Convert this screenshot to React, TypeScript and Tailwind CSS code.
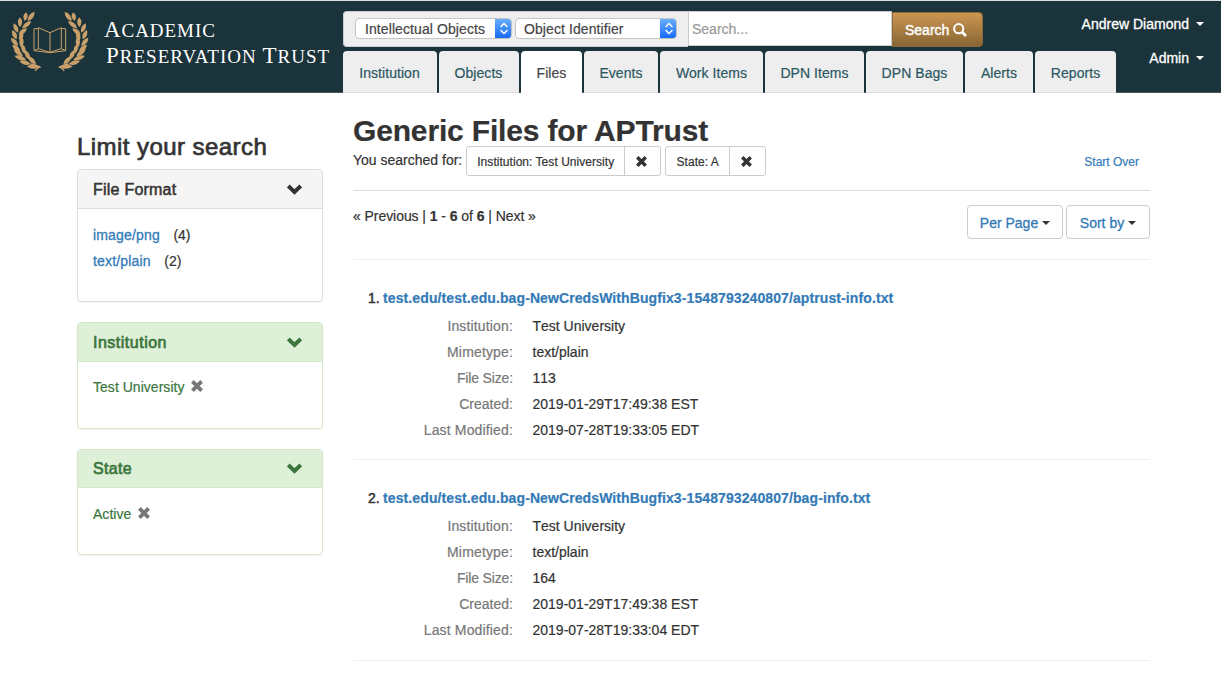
import React from 'react';

const LEAVES: number[][] = [
  [83, 63, 104, 35], [74, 63, 79, 37], [60, 81, 60, 52], [66, 85, 94, 63], [54, 98, 41, 70],
  [56, 104, 81, 85], [50, 118, 37, 90], [59, 121, 68, 95], [54, 138, 33, 113], [64, 143, 65, 108],
  [61, 155, 37, 134], [74, 161, 67, 133], [69, 169, 41, 148], [78, 179, 43, 167], [89, 179, 75, 150],
  [92, 193, 58, 183], [108, 193, 83, 169], [120, 201, 80, 199],
];

function leafPath([x1, y1, x2, y2]: number[]) {
  const mx = (x1 + x2) / 2;
  const my = (y1 + y2) / 2;
  const len = Math.hypot(x2 - x1, y2 - y1);
  const nx = (-(y2 - y1) / len) * 13;
  const ny = ((x2 - x1) / len) * 13;
  return `M${x1} ${y1}Q${mx + nx} ${my + ny} ${x2} ${y2}Q${mx - nx} ${my - ny} ${x1} ${y1}Z`;
}

function Branch() {
  return (
    <g fill="#c9a06a">
      {LEAVES.map((l, i) => <path key={i} d={leafPath(l)} />)}
      <path d="M92 192Q112 196 122 203M120 199L105 212" fill="none" stroke="#c9a06a" strokeWidth="4" />
    </g>
  );
}

function Emblem() {
  return (
    <svg className="h-20 w-[100px] shrink-0" viewBox="0 0 300 240">
      <Branch />
      <g transform="translate(298 0) scale(-1 1)"><Branch /></g>
      <g fill="none" stroke="#c9a06a" strokeWidth="3">
        <path d="M115 83L150 98L184 83V146L150 157L115 146Z" />
        <path d="M150 98V157" />
        <path d="M115 86H102V152L150 158L197 152V86H184M102 152L115 146M197 152L184 146" />
      </g>
    </svg>
  );
}

function Chevron() {
  return (
    <svg className="-mt-px h-[11px] w-[15px]" viewBox="0 0 14 10" fill="none" stroke="currentColor" strokeWidth="3.7">
      <path d="M1.2 1.7L7 7.3L12.8 1.7" />
    </svg>
  );
}

function Cross({ className }: { className: string }) {
  return (
    <svg className={className} viewBox="0 0 12 12" fill="none" stroke="currentColor" strokeWidth="3.8">
      <path d="M1.4 1.4L10.6 10.6M10.6 1.4L1.4 10.6" />
    </svg>
  );
}

function Caret() {
  return <span className="inline-block border-x-4 border-t-4 border-x-transparent border-t-current" />;
}

function NativeSelect({ label, className }: { label: string; className: string }) {
  return (
    <div className={`flex h-[21px] overflow-hidden rounded-[4px] border border-[#c4c4c4] bg-white text-[14px] leading-[20px] tracking-[0.09px] text-[#444] ${className}`}>
      <span className="flex-1 whitespace-nowrap">{label}</span>
      <span className="-my-px -mr-px flex w-[17px] items-center justify-center bg-linear-to-b from-[#6cb0fb] to-[#0a66f8]">
        <svg className="h-[13px] w-2" viewBox="0 0 8 13" fill="none" stroke="#fff" strokeWidth="1.5" strokeLinecap="round" strokeLinejoin="round">
          <path d="M1 4.5L4 1.5L7 4.5M1 8.5L4 11.5L7 8.5" />
        </svg>
      </span>
    </div>
  );
}

const TABS = [
  { label: 'Institution', w: 'w-[94px] pr-px' },
  { label: 'Objects', w: 'w-[80px] pr-px' },
  { label: 'Files', w: 'w-[61px]' },
  { label: 'Events', w: 'w-[74px]' },
  { label: 'Work Items', w: 'w-[103px]' },
  { label: 'DPN Items', w: 'w-[99px]' },
  { label: 'DPN Bags', w: 'w-[97px]' },
  { label: 'Alerts', w: 'w-[68px]' },
  { label: 'Reports', w: 'w-[81px]' },
];

function Header() {
  return (
    <header className="flex h-[93px] border-t border-b border-t-[#dcdfdf] border-b-[#47565b] bg-[#1b333a]">
      <div className="flex w-[343px] shrink-0">
        <div className="-mt-px"><Emblem /></div>
        <div className="ml-1 pt-4 font-['Liberation_Serif',serif] text-[19px] leading-[25px] whitespace-nowrap text-white [-webkit-text-stroke:0]">
          <div className="tracking-[0.95px]"><span className="text-[23px]">A</span>CADEMIC</div>
          <div className="ml-0.5 tracking-[1px]">
            <span className="text-[23px]">P</span>RESERVATION <span className="text-[23px]">T</span>RUST
          </div>
        </div>
      </div>
      <div className="-mb-px flex w-[773px] shrink-0 flex-col justify-between pt-[10px]">
        <div className="flex h-9">
          <div className="flex w-[345px] items-center gap-[3px] rounded-l-[4px] border border-r-0 border-[#ccc] bg-[#eee] pb-px pl-[11px]">
            <NativeSelect label="Intellectual Objects" className="w-[157px] pl-[9px]" />
            <NativeSelect label="Object Identifier" className="w-[162px] pl-[8px]" />
          </div>
          <div className="h-[35px] w-[204px] border border-[#ccc] bg-white pl-[3px] text-[14px] leading-[34px] text-[#999]">Search...</div>
          <button className="mt-px flex h-[35px] w-[91px] items-center gap-1 rounded-r-[4px] border border-[#8c6a3a] bg-linear-to-b from-[#cd9652] to-[#886633] pl-3 text-[14px] font-normal text-white [-webkit-text-stroke:0.4px]">
            Search
            <svg className="h-[14px] w-[14px]" viewBox="0 0 14 14" fill="none" stroke="#fff" strokeWidth="2">
              <circle cx="5.7" cy="5.7" r="4.6" />
              <path d="M9 9L13 13" strokeWidth="2.6" />
            </svg>
          </button>
        </div>
        <nav className="flex h-[42px] gap-0.5">
          {TABS.map((t) => (
            <a
              key={t.label}
              className={`${t.w} flex items-center justify-center rounded-t-[4px] pt-[2px] text-[14px] leading-5 tracking-[0.06px] whitespace-nowrap ${
                t.label === 'Files' ? 'bg-white text-[#444]' : 'border-b border-[#ddd] bg-[#eee] text-[#2c5763]'
              }`}
            >
              {t.label}
            </a>
          ))}
        </nav>
      </div>
      <div className="-ml-[40px] flex w-[145px] shrink-0 flex-col items-end gap-[14px] pt-[13px] pr-[17px] text-[14px] leading-5 whitespace-nowrap text-white [-webkit-text-stroke:0.3px]">
        <div className="flex items-center gap-[7px]">Andrew Diamond <Caret /></div>
        <div className="flex items-center gap-[7px]">Admin <Caret /></div>
      </div>
    </header>
  );
}

function Panel({ title, tone, className, headClass, children }: { title: string; tone: 'gray' | 'green'; className: string; headClass: string; children: React.ReactNode }) {
  const green = tone === 'green';
  return (
    <section className={`overflow-hidden rounded-[4px] border shadow-[0_1px_1px_rgba(0,0,0,0.05)] ${green ? 'border-[#d6e9c6] text-[#3c763d]' : 'border-[#ddd]'} ${className}`}>
      <div className={`flex items-center justify-between border-b pr-[20px] pl-[15px] ${green ? 'border-[#d6e9c6] bg-[#dff0d8]' : 'border-[#ddd] bg-[#f5f5f5]'} ${headClass}`}>
        <h3 className="text-[16px] leading-5">{title}</h3>
        <Chevron />
      </div>
      {children}
    </section>
  );
}

function Applied({ label, className }: { label: string; className: string }) {
  return (
    <div className={`flex items-center gap-[7px] pl-[15px] leading-5 tracking-[0.03px] ${className}`}>
      {label}
      <Cross className="-mt-[2px] h-3 w-3 text-[#777]" />
    </div>
  );
}

function Constraint({ label, className }: { label: string; className: string }) {
  return (
    <span className={`flex h-[30px] rounded-[3px] border border-[#ccc] text-[12px] leading-[29px] ${className}`}>
      <span className="flex-1 pt-px text-center tracking-[0.04px]">{label}</span>
      <span className="flex w-[36px] items-center justify-center border-l border-[#ccc] pr-[3px]"><Cross className="h-[11px] w-[11px]" /></span>
    </span>
  );
}

function Result({ n, title, size, modified, className }: { n: number; title: string; size: string; modified: string; className: string }) {
  const rows = [
    ['Institution:', 'Test University', 'tracking-[0.15px]'],
    ['Mimetype:', 'text/plain', 'tracking-[0.15px]'],
    ['File Size:', size, 'tracking-[-0.15px]'],
    ['Created:', '2019-01-29T17:49:38 EST', 'tracking-[0.02px]'],
    ['Last Modified:', modified, 'tracking-[0.15px]'],
  ];
  return (
    <article className={`border-b border-[#eee] pt-[28px] ${className}`}>
      <h4 className="pl-[15px] text-[14px] leading-5 whitespace-nowrap">
        <span className="[-webkit-text-stroke:0.5px]">{n}. </span>
        <a className="-ml-[0.5px] font-bold tracking-[0.097px] text-[#337ab7]">{title}</a>
      </h4>
      <dl className="mt-[5px] grid grid-cols-[160px_1fr] gap-x-[19.5px] leading-[26px]">
        {rows.map(([k, v, tracking]) => (
          <React.Fragment key={k}>
            <dt className={`text-right text-[#777] ${tracking}`}>{k}</dt>
            <dd className="[font-kerning:none]">{v}</dd>
          </React.Fragment>
        ))}
      </dl>
    </article>
  );
}

export default function App() {
  return (
    <div className="h-[674px] w-[1221px] overflow-hidden bg-white font-['Liberation_Sans',Arial,sans-serif] text-[14px] leading-5 text-[#333] [-webkit-text-stroke:0.2px]">
      <Header />
      <div className="flex">
        <aside className="ml-[77px] w-[246px] shrink-0 pt-[39px]">
          <h2 className="h-[37px] text-[24px] leading-[30px] tracking-[0.44px] whitespace-nowrap [-webkit-text-stroke:0.7px]">Limit your search</h2>
          <Panel title="File Format" tone="gray" className="h-[133px]" headClass="h-[39px] pt-px tracking-[0.23px] [-webkit-text-stroke:0.5px]">
            <ul className="pt-[13px] pl-[15px] leading-[26px]">
              <li><a className="mr-[13.5px] tracking-[0.17px] text-[#337ab7] [-webkit-text-stroke:0.3px]">image/png</a>(4)</li>
              <li><a className="mr-[13.5px] tracking-[0.17px] text-[#337ab7] [-webkit-text-stroke:0.3px]">text/plain</a>(2)</li>
            </ul>
          </Panel>
          <Panel title="Institution" tone="green" className="mt-5 h-[107px]" headClass="h-[39px] pt-px tracking-[0.5px] [-webkit-text-stroke:0.7px]"><Applied label="Test University" className="pt-[15px]" /></Panel>
          <Panel title="State" tone="green" className="mt-5 h-[106px]" headClass="h-[38px] tracking-[0.3px] [-webkit-text-stroke:0.7px]"><Applied label="Active" className="pt-[16px]" /></Panel>
        </aside>
        <main className="ml-[30px] w-[797px] pt-[21px]">
          <h1 className="h-[32px] text-[30px] leading-[34px] font-bold tracking-[-0.16px] whitespace-nowrap">Generic Files for APTrust</h1>
          <div className="flex h-[45px] border-b border-[#ddd]">
            <span className="pt-[4px] whitespace-nowrap">You searched for:</span>
            <Constraint label="Institution: Test University" className="ml-1 w-[195px]" />
            <Constraint label="State: A" className="ml-1 w-[101px]" />
            <a className="mt-[6px] mr-[11px] ml-auto text-[12px] text-[#337ab7]">Start Over</a>
          </div>
          <div className="flex h-[69px] justify-between border-b border-[#eee] pt-[14px]">
            <span className="pt-px tracking-[-0.06px]">« Previous | <b>1</b> - <b>6</b> of <b>6</b> | Next »</span>
            <div className="flex gap-[3px] text-[#337ab7] [-webkit-text-stroke:0.3px]">
              <button className="flex h-[34px] w-[96px] items-center justify-center gap-1 rounded-[4px] border border-[#ccc] pt-px">Per Page <span className="flex text-[#333]"><Caret /></span></button>
              <button className="flex h-[34px] w-[84px] items-center justify-center gap-1 rounded-[4px] border border-[#ccc] pt-px">Sort by <span className="flex text-[#333]"><Caret /></span></button>
            </div>
          </div>
          <Result n={1} title="test.edu/test.edu.bag-NewCredsWithBugfix3-1548793240807/aptrust-info.txt" size="113" modified="2019-07-28T19:33:05 EDT" className="h-[200px]" />
          <Result n={2} title="test.edu/test.edu.bag-NewCredsWithBugfix3-1548793240807/bag-info.txt" size="164" modified="2019-07-28T19:33:04 EDT" className="h-[201px]" />
        </main>
      </div>
    </div>
  );
}
